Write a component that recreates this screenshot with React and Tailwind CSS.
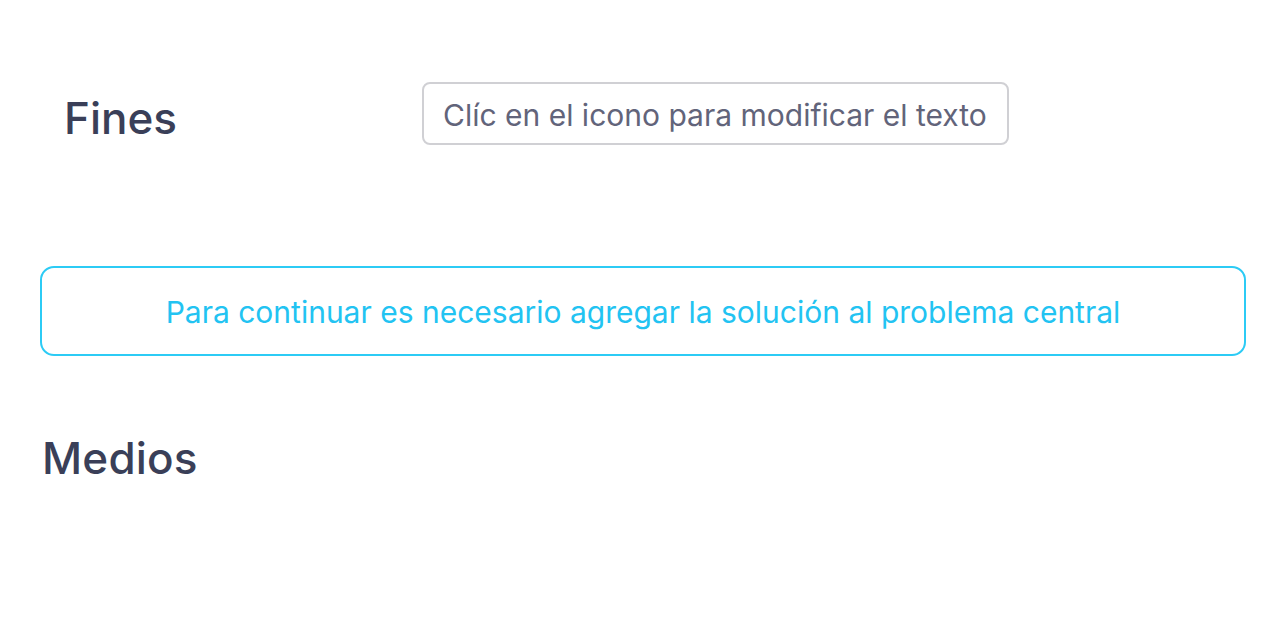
export default function App() {
    return (
        <div className="min-h-screen bg-white font-['Inter',sans-serif]">
            {/* Fines row */}
            <div className="flex items-center pt-[82px]">
                <h2 className="w-[422px] pl-[64px] pt-[8px] text-[44px] font-medium leading-none text-[#3a3f58]">Fines</h2>
                <div className="flex h-[63px] w-[587px] items-center rounded-[8px] border-2 border-[#d0d0d4] px-[19px] pt-[4px] text-[30px] text-[#62647a]">
                    Clíc en el icono para modificar el texto
                </div>
            </div>

            {/* Notice */}
            <div className="mx-[40px] mt-[121px] flex h-[90px] w-[1206px] items-center justify-center rounded-[14px] border-2 border-[#2ccbf5] pt-[2px] text-[30px] text-[#22c3f2]">
                Para continuar es necesario agregar la solución al problema central
            </div>

            {/* Medios */}
            <h2 className="mt-[80px] pl-[42px] text-[44px] font-medium leading-none tracking-[0.2px] text-[#3a3f58]">Medios</h2>
        </div>
    )
}
